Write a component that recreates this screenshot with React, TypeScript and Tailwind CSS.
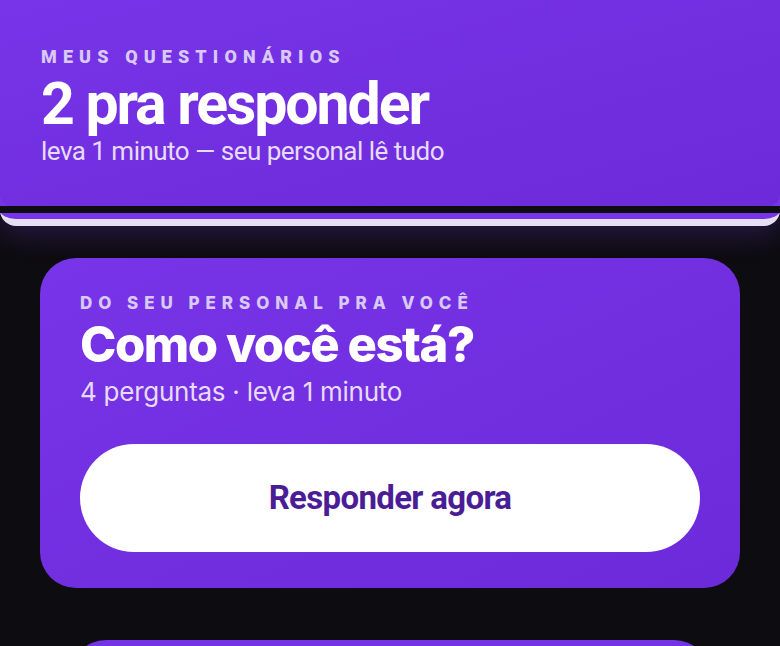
export default function App() {
  return (
    <div className="w-[780px] h-[646px] overflow-hidden bg-[#0d0c10]" style={{ fontFamily: "Roboto, 'Liberation Sans', sans-serif" }}>
      {/* stacked header */}
      <div className="rounded-b-[16px] bg-[#7535e6] border-b-[7px] border-[#e6def2] shadow-[0_8px_28px_rgba(110,60,220,0.28)]">
        <div className="h-[206px] rounded-b-[12px] bg-gradient-to-br from-[#7834e8] to-[#6c2ad9] px-[41px] pt-[46px]">
          <div className="text-[18px] font-black tracking-[0.34em] text-[#d8c9f6] leading-[22px]">MEUS QUESTIONÁRIOS</div>
          <h1 className="mt-[6px] text-[59px] font-bold tracking-[-0.035em] text-white leading-[60px]">2 pra responder</h1>
          <p className="mt-[2px] text-[26px] tracking-[-0.02em] text-[#e6dcfa] leading-[30px]">leva 1 minuto — seu personal lê tudo</p>
        </div>
        <div className="h-[7px] bg-[#0d0c10]" />
        <div className="h-[6px]" />
      </div>

      <div className="px-[40px] pt-[32px] flex flex-col gap-[52px]">
        <div className="rounded-[36px] bg-gradient-to-br from-[#7834e8] to-[#6c2ad9] px-[40px] pt-[34px] pb-[36px]">
          <div className="text-[17px] font-extrabold tracking-[0.35em] text-[#d8c9f6] leading-[22px]" style={{ fontFamily: "Inter, sans-serif" }}>DO SEU PERSONAL PRA VOCÊ</div>
          <h2 className="mt-[4px] text-[49px] font-extrabold tracking-[-0.03em] text-white leading-[54px]" style={{ fontFamily: "Inter, sans-serif" }}>Como você está?</h2>
          <p className="mt-[4px] text-[26px] text-[#e6dcfa] leading-[32px] tracking-[-0.01em]" style={{ fontFamily: "Inter, sans-serif" }}>4 perguntas · leva 1 minuto</p>
          <button className="mt-[36px] w-full h-[108px] rounded-full bg-white text-[33px] font-bold tracking-[-0.02em] text-[#4a1d96]">Responder agora</button>
        </div>
        <div className="mx-[30px] h-[60px] rounded-t-[36px] bg-[#7434e6]" />
      </div>
    </div>
  );
}
